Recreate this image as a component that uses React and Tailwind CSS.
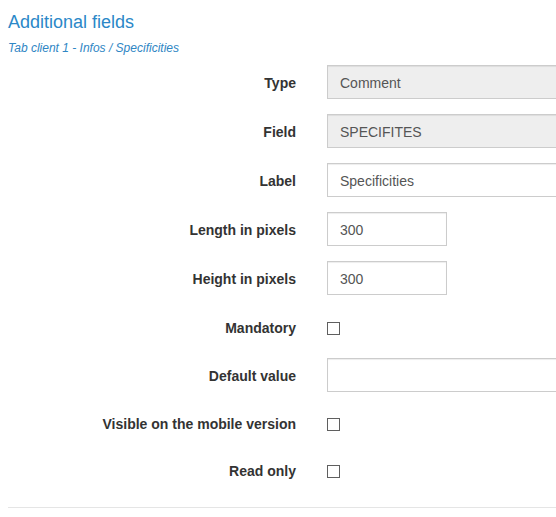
export default function App() {
  const font = { fontFamily: '"Liberation Sans", Arial, sans-serif' };
  const InputRow = ({ label, value, disabled, short }) => (
    <div className="flex h-[34px] mb-[15px]">
      <div className="w-[296px] shrink-0 text-right pt-[8px] text-[14px] leading-[20px] font-bold text-[#333333]">
        {label}
      </div>
      <div className="ml-[31px] flex-1 overflow-visible">
        <div
          className={`h-[34px] ${short ? "w-[120px]" : "w-[300px]"} border border-[#cccccc] ${
            disabled ? "bg-[#eeeeee]" : "bg-white"
          } px-[12px] pt-[2px] flex items-center text-[14px] text-[#555555] shadow-[inset_0_1px_1px_rgba(0,0,0,0.075)]`}
        >
          {value}
        </div>
      </div>
    </div>
  );
  const CheckRow = ({ label, h, pt, mt, mb }) => (
    <div className={`flex ${h} ${mb}`}>
      <div className={`w-[296px] shrink-0 text-right ${pt} text-[14px] leading-[20px] font-bold text-[#333333]`}>
        {label}
      </div>
      <div className="ml-[31px]">
        <div className={`${mt} w-[13px] h-[13px] border border-[#5f5f5f] bg-white`} />
      </div>
    </div>
  );
  return (
    <div className="w-[556px] h-[517px] bg-white overflow-hidden" style={font}>
      <div className="pl-[8px]">
        <h1 className="pt-[12px] text-[18px] leading-[20px] font-normal text-[#2b88c8]">Additional fields</h1>
        <div className="mt-[8px] text-[12px] leading-[16px] italic text-[#2f86c4]">
          Tab client 1 - Infos / Specificities
        </div>
      </div>
      <div className="mt-[9px]">
        <InputRow label="Type" value="Comment" disabled />
        <InputRow label="Field" value="SPECIFITES" disabled />
        <InputRow label="Label" value="Specificities" />
        <InputRow label="Length in pixels" value="300" short />
        <InputRow label="Height in pixels" value="300" short />
        <CheckRow label="Mandatory" h="h-[33px]" pt="pt-[8px]" mt="mt-[12px]" mb="mb-[15px]" />
        <InputRow label="Default value" value="" />
        <CheckRow label="Visible on the mobile version" h="h-[32px]" pt="pt-[7px]" mt="mt-[11px]" mb="mb-[15px]" />
        <CheckRow label="Read only" h="h-[32px]" pt="pt-[7px]" mt="mt-[11px]" mb="mb-[21px]" />
      </div>
      <div className="ml-[8px] border-t border-[#e5e5e5]" />
    </div>
  );
}
